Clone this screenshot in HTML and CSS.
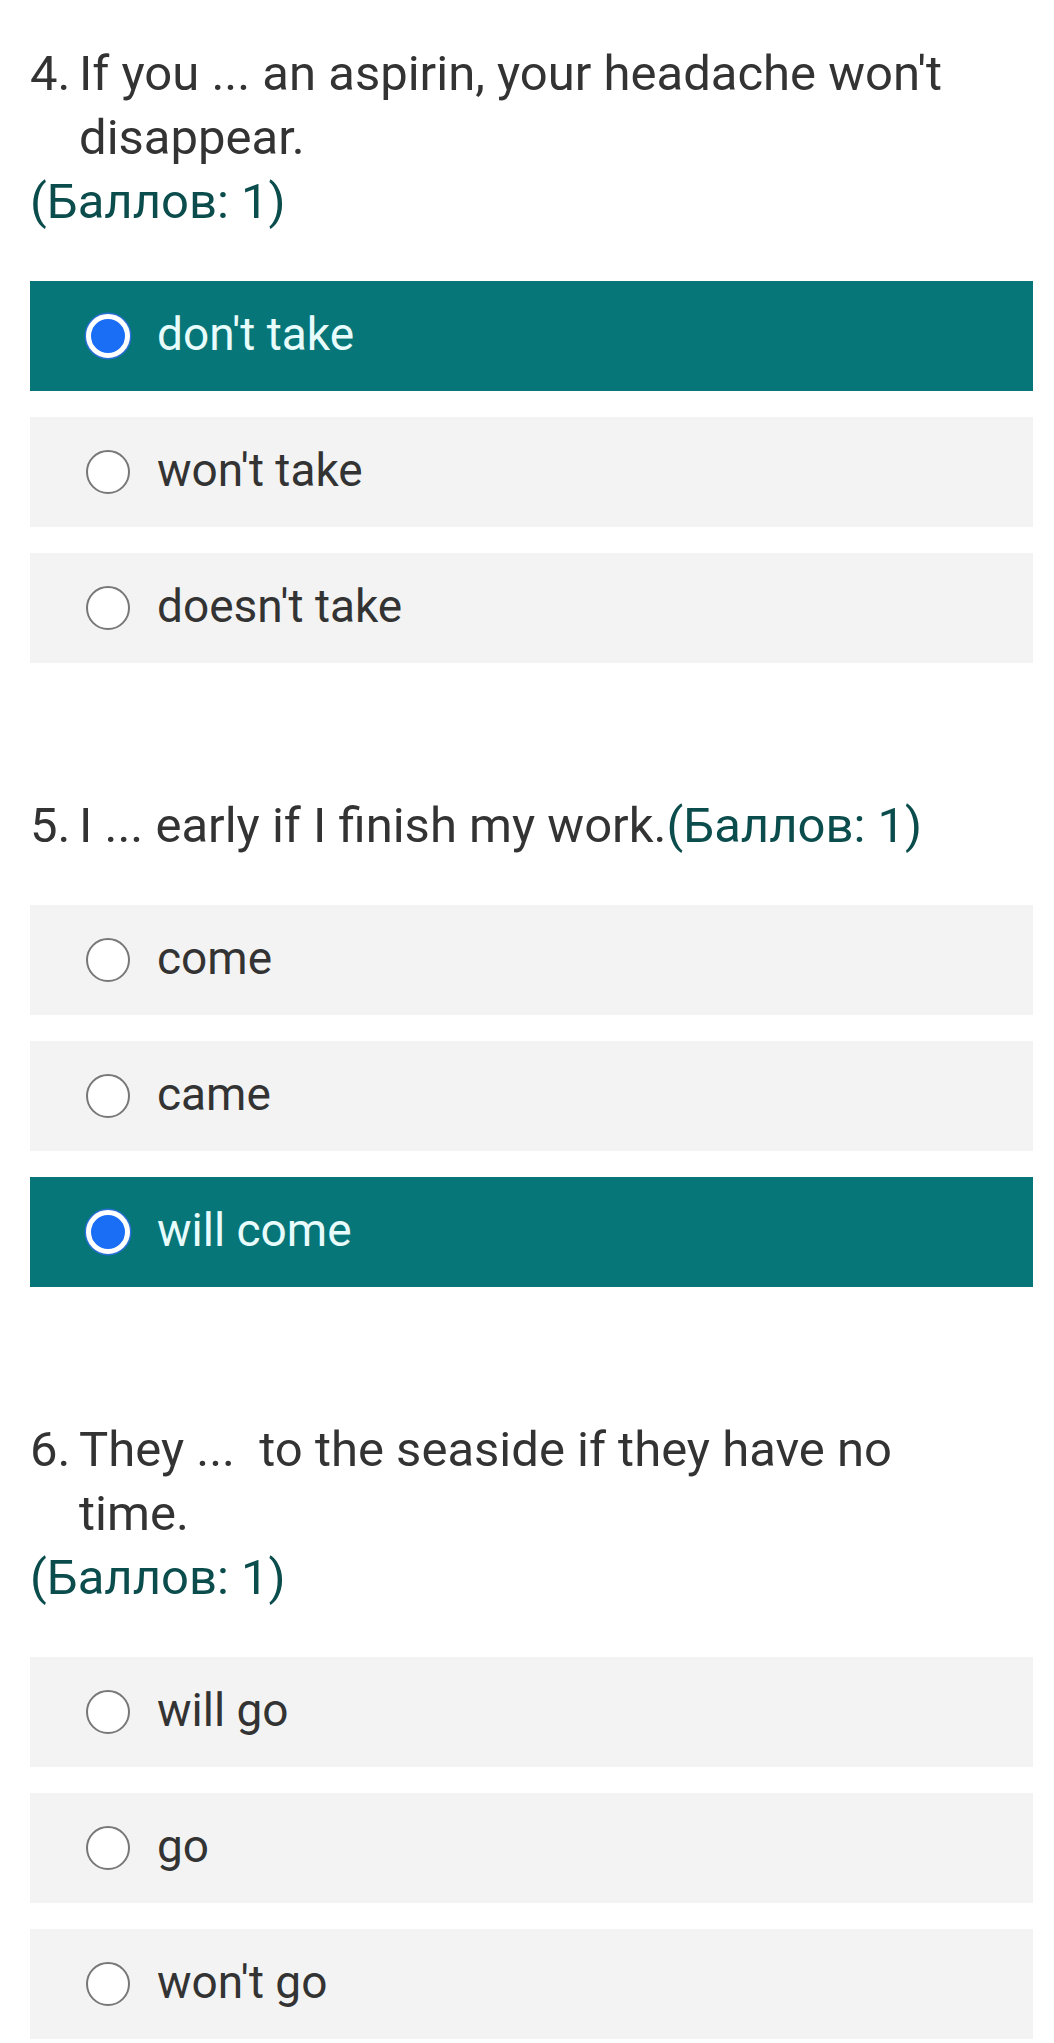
FILE: index.html
```html
<!DOCTYPE html>
<html lang="ru">
<head>
<meta charset="utf-8">
<title>Тест</title>
<link rel="stylesheet" href="styles.css">
</head>
<body>
<main class="quiz">
  <section class="question">
    <div class="q-head"><span class="q-num">4.</span><span class="q-text">If you ... an aspirin, your headache won't disappear.</span></div>
    <div class="points">(Баллов: 1)</div>
    <div class="options">
      <label class="option selected"><span class="radio"></span><span class="opt-text">don't take</span></label>
      <label class="option"><span class="radio"></span><span class="opt-text">won't take</span></label>
      <label class="option"><span class="radio"></span><span class="opt-text">doesn't take</span></label>
    </div>
  </section>
  <section class="question">
    <div class="q-head"><span class="q-num">5.</span><span class="q-text">I ... early if I finish my work.<span class="points-inline">(Баллов: 1)</span></span></div>
    <div class="options">
      <label class="option"><span class="radio"></span><span class="opt-text">come</span></label>
      <label class="option"><span class="radio"></span><span class="opt-text">came</span></label>
      <label class="option selected"><span class="radio"></span><span class="opt-text">will come</span></label>
    </div>
  </section>
  <section class="question">
    <div class="q-head"><span class="q-num">6.</span><span class="q-text">They ...&nbsp; to the seaside if they have no time.</span></div>
    <div class="points">(Баллов: 1)</div>
    <div class="options">
      <label class="option"><span class="radio"></span><span class="opt-text">will go</span></label>
      <label class="option"><span class="radio"></span><span class="opt-text">go</span></label>
      <label class="option"><span class="radio"></span><span class="opt-text">won't go</span></label>
    </div>
  </section>
</main>
</body>
</html>
```
FILE: styles.css
```css
html, body {
  margin: 0;
  padding: 0;
  background: #ffffff;
}
body {
  font-family: Roboto, "Noto Sans", sans-serif;
  color: #333333;
}
.quiz {
  padding: 42px 21px 0 30px;
}
.question {
  margin-bottom: 131px;
}
.question:last-child {
  margin-bottom: 0;
}
.q-head {
  display: flex;
  font-size: 49px;
  line-height: 64px;
  color: #333333;
  padding-right: 50px;
}
.q-num {
  flex: 0 0 49px;
}
.q-text {
  flex: 1 1 auto;
}
.points, .points-inline {
  color: #0b4c4c;
  font-size: 49px;
  line-height: 64px;
}
.options {
  display: flex;
  flex-direction: column;
  gap: 26px;
  margin-top: 47px;
}
.option {
  display: flex;
  align-items: center;
  height: 110px;
  padding-left: 56px;
  background: #f3f3f3;
  font-size: 46px;
  color: #333333;
}
.option.selected {
  background: #077679;
  color: #e8fcfc;
}
.radio {
  box-sizing: border-box;
  width: 44px;
  height: 44px;
  border-radius: 50%;
  border: 2px solid #777777;
  background: #ffffff;
  flex: 0 0 44px;
}
.option.selected .radio {
  border: 5px solid #ffffff;
  background: #1a6ef5;
  box-shadow: 0 0 0 1.5px #2a6fd8;
}
.opt-text {
  margin-left: 27px;
  padding-bottom: 4px;
}
```
